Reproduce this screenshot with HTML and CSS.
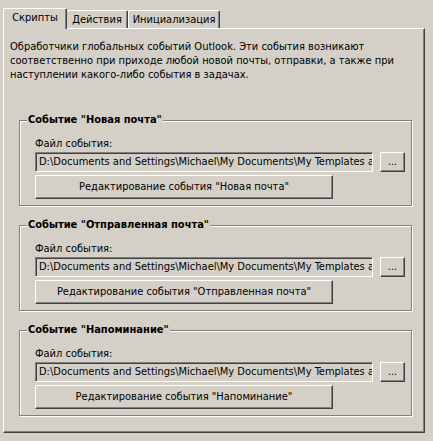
FILE: index.html
```html
<!DOCTYPE html>
<html lang="ru">
<head>
<meta charset="utf-8">
<title>Скрипты</title>
<link rel="stylesheet" href="styles.css">
</head>
<body>
<div class="dialog">
  <div class="tabs">
    <div class="tab tab-active">Скрипты</div>
    <div class="tab tab-actions">Действия</div>
    <div class="tab tab-init">Инициализация</div>
  </div>
  <div class="panel">
    <p class="desc">Обработчики глобальных событий Outlook. Эти события возникают<br>соответственно при приходе любой новой почты, отправки, а также при<br>наступлении какого-либо события в задачах.</p>

    <fieldset class="group">
      <legend class="group-title">Событие "Новая почта"</legend>
      <div class="label">Файл события:</div>
      <div class="file-row">
        <div class="input">D:\Documents and Settings\Michael\My Documents\My Templates and Scripts\NewMail.js</div>
        <button class="btn btn-browse">...</button>
      </div>
      <button class="btn btn-edit">Редактирование события "Новая почта"</button>
    </fieldset>

    <fieldset class="group">
      <legend class="group-title">Событие "Отправленная почта"</legend>
      <div class="label">Файл события:</div>
      <div class="file-row">
        <div class="input">D:\Documents and Settings\Michael\My Documents\My Templates and Scripts\SentMail.js</div>
        <button class="btn btn-browse">...</button>
      </div>
      <button class="btn btn-edit">Редактирование события "Отправленная почта"</button>
    </fieldset>

    <fieldset class="group">
      <legend class="group-title">Событие "Напоминание"</legend>
      <div class="label">Файл события:</div>
      <div class="file-row">
        <div class="input">D:\Documents and Settings\Michael\My Documents\My Templates and Scripts\Reminder.js</div>
        <button class="btn btn-browse">...</button>
      </div>
      <button class="btn btn-edit">Редактирование события "Напоминание"</button>
    </fieldset>
  </div>
</div>
</body>
</html>
```
FILE: styles.css
```css
* { box-sizing: border-box; }

html, body {
  margin: 0;
  padding: 0;
  background: #d4d0c8;
}

body {
  font-family: "DejaVu Sans Condensed", "Liberation Sans", sans-serif;
  font-size: 11px;
  line-height: 14px;
  color: #000;
}

.dialog {
  width: 433px;
  height: 441px;
  padding: 8px 8px 8px 3px;
}

/* ---------- tabs ---------- */
.tabs {
  display: flex;
  align-items: flex-end;
  height: 20px;
}

.tab {
  height: 18px;
  background: #d4d0c8;
  border-top: 1px solid #fff;
  border-left: 1px solid #fff;
  border-right: 1px solid #404040;
  box-shadow: inset -1px 0 #808080;
  border-top-left-radius: 2px;
  border-top-right-radius: 2px;
  text-align: center;
  line-height: 17px;
  white-space: nowrap;
}

.tab-active {
  position: relative;
  z-index: 1;
  width: 64px;
  height: 21px;
  margin-bottom: -1px;
  line-height: 18px;
}

.tab-actions {
  width: 61px;
  border-left: 0;
}

.tab-init {
  width: 92px;
}

/* ---------- panel ---------- */
.panel {
  height: 405px;
  border-top: 1px solid #fff;
  border-left: 1px solid #fff;
  border-right: 1px solid #404040;
  border-bottom: 1px solid #404040;
  box-shadow: inset -1px -1px #808080;
  padding: 11px 11px 0 15px;
}

.desc {
  margin: 0 0 0 -9px;
  white-space: nowrap;
}

/* ---------- group boxes ---------- */
.group {
  margin: 31px 0 0 0;
  padding: 10px 6px 6px 15px;
  border: 1px solid #808080;
  box-shadow: inset 1px 1px #fff, 1px 1px #fff;
  min-width: 0;
  width: 393px;
}

.group + .group {
  margin-top: 12px;
}

.group-title {
  margin-left: -8px;
  padding: 0 1px;
  font-weight: bold;
  line-height: 14px;
  background: #d4d0c8;
}

.label {
  height: 14px;
  margin-bottom: 1px;
  white-space: nowrap;
}

.file-row {
  display: flex;
  align-items: center;
  gap: 7px;
}

.input {
  width: 338px;
  height: 20px;
  padding: 2px 3px;
  border: 1px solid;
  border-color: #808080 #fff #fff #808080;
  box-shadow: inset 1px 1px #404040;
  background: #d4d0c8;
  white-space: nowrap;
  overflow: hidden;
}

.btn {
  display: block;
  font: inherit;
  color: #000;
  background: #d4d0c8;
  border: 1px solid;
  border-color: #fff #404040 #404040 #fff;
  box-shadow: inset -1px -1px #808080;
  border-radius: 0;
  padding: 0;
  margin: 0;
  white-space: nowrap;
}

.btn-browse {
  width: 25px;
  height: 20px;
  line-height: 14px;
}

.btn-edit {
  width: 298px;
  height: 24px;
  margin-top: 3px;
}
```
